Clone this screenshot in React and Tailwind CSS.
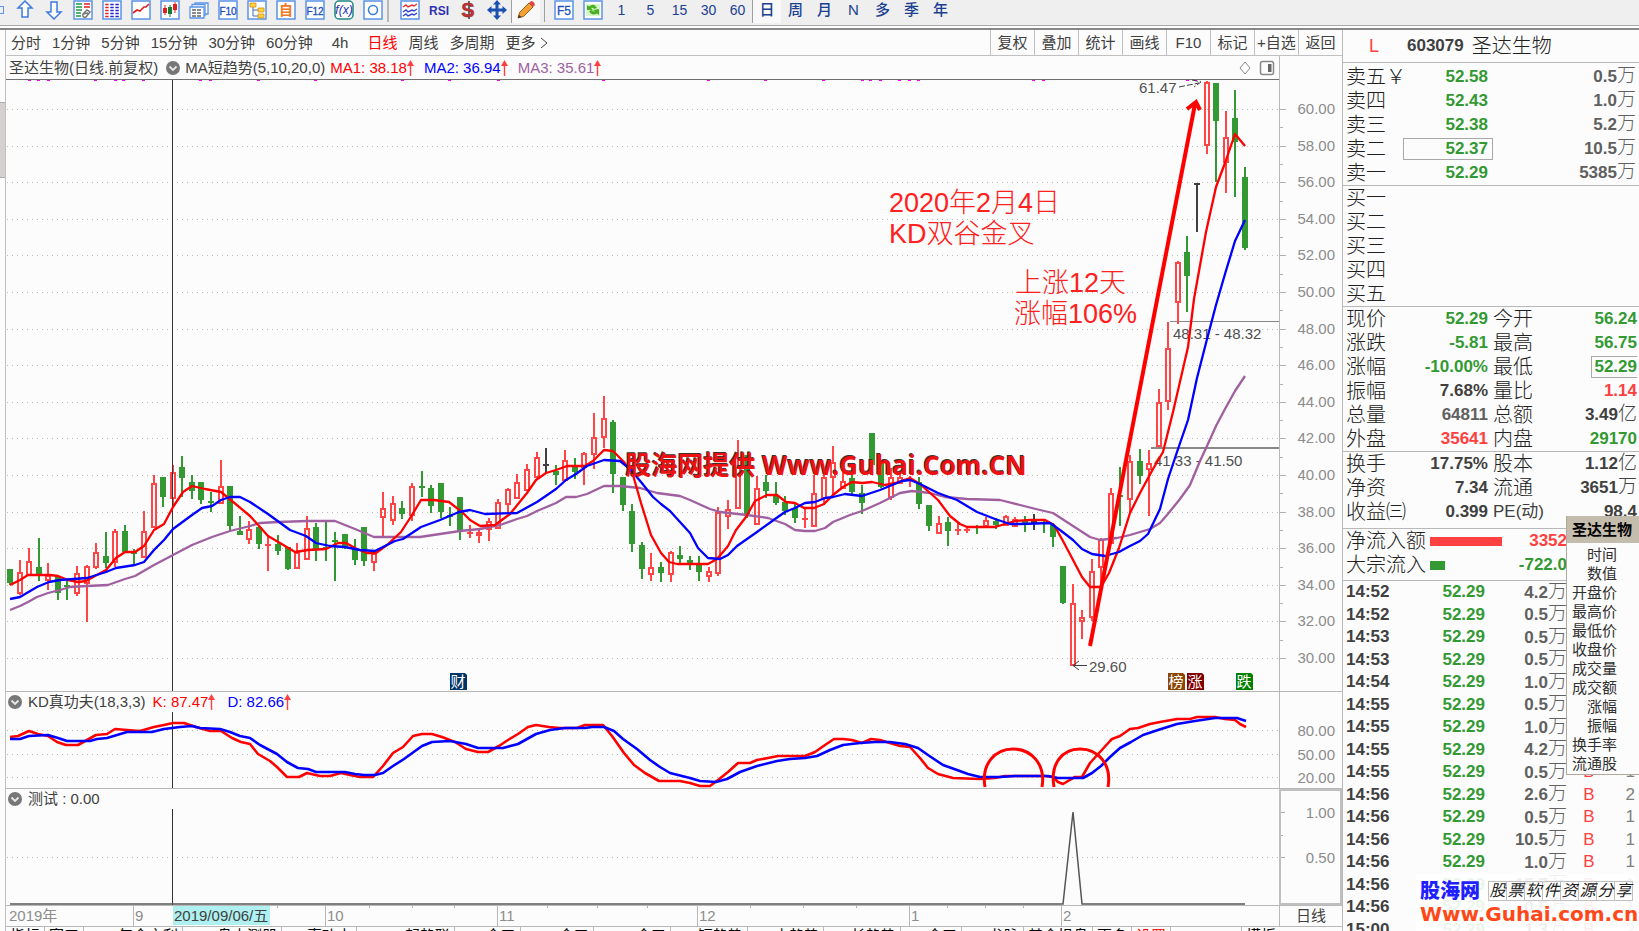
import { Fragment } from 'react';

const PERIODS = ['分时', '1分钟', '5分钟', '15分钟', '30分钟', '60分钟', '4h', '日线', '周线', '多周期', '更多'];
const ACTIONS = ['复权', '叠加', '统计', '画线', 'F10', '标记', '+自选', '返回'];
const MINUTES = ['1', '5', '15', '30', '60'];
const CYCLES = ['日', '周', '月', 'N', '多', '季', '年'];
const BOTTOM_TABS = [
  '指标', '窗口', 'VOL年金之利', 'VOL盘中测器', 'KD真功夫', 'MACD起趋联', 'MBI金叉', 'BIAS金叉', 'BOLL金叉',
  'MA短趋势', 'MA中趋势', 'MA长趋势', 'MA金叉', 'MA龙脉', '基金损盘', '更多', '设置',
];

const GREEN = 'text-[#339933]';
const RED = 'text-[#ff4040]';
const DARK = 'text-[#404040]';
const GRAY = 'text-[#606060]';

const SELLS = [
  ['卖五', '52.58', '0.5万'],
  ['卖四', '52.43', '1.0万'],
  ['卖三', '52.38', '5.2万'],
  ['卖二', '52.37', '10.5万'],
  ['卖一', '52.29', '5385万'],
];
const BUYS = ['买一', '买二', '买三', '买四', '买五'];

const QUOTES = [
  ['现价', '52.29', GREEN, '今开', '56.24', GREEN],
  ['涨跌', '-5.81', GREEN, '最高', '56.75', GREEN],
  ['涨幅', '-10.00%', GREEN, '最低', '52.29', GREEN],
  ['振幅', '7.68%', DARK, '量比', '1.14', RED],
  ['总量', '64811', GRAY, '总额', '3.49亿', DARK],
  ['外盘', '35641', RED, '内盘', '29170', GREEN],
];
const FUNDAMENTALS = [
  ['换手', '17.75%', DARK, '股本', '1.12亿', DARK],
  ['净资', '7.34', DARK, '流通', '3651万', DARK],
  ['收益㈢', '0.399', DARK, 'PE(动)', '98.4', DARK],
];

const TRADES = [
  ['14:52', '4.2万', '1'], ['14:52', '0.5万', '1'], ['14:53', '0.5万', '1'], ['14:53', '0.5万', '1'],
  ['14:54', '1.0万', '1'], ['14:55', '0.5万', '1'], ['14:55', '1.0万', '1'], ['14:55', '4.2万', '1'],
  ['14:55', '0.5万', '1'], ['14:56', '2.6万', '2'], ['14:56', '0.5万', '1'], ['14:56', '10.5万', '1'],
  ['14:56', '1.0万', '1'], ['14:56', '15.7万', '1'], ['14:56', '0.5万', '1'], ['15:00', '1.3万', '2'],
];

const TIP_ROWS = ['时间', '数值', '开盘价', '最高价', '最低价', '收盘价', '成交量', '成交额', '涨幅', '振幅', '换手率', '流通股'];

// kind, high, body top, body bottom, low (chart units)
const CANDLES = [
  ['g', 569, 569, 583, 585], ['r', 560, 572, 593, 595], ['r', 548, 561, 575, 575], ['g', 538, 567, 576, 581],
  ['r', 563, 575, 580, 590], ['g', 577, 577, 593, 600], ['g', 580, 585, 587, 600], ['r', 566, 573, 593, 596],
  ['r', 565, 566, 583, 622], ['r', 543, 552, 567, 569], ['g', 532, 556, 563, 568], ['r', 529, 531, 562, 567],
  ['g', 525, 531, 552, 552], ['g', 549, 552, 554, 564], ['r', 511, 531, 557, 557], ['r', 475, 483, 527, 528],
  ['g', 477, 477, 497, 507], ['r', 465, 472, 498, 505], ['g', 456, 467, 478, 497], ['g', 475, 482, 491, 499],
  ['g', 482, 482, 500, 504], ['g', 492, 501, 503, 512], ['r', 460, 486, 503, 504], ['g', 486, 486, 526, 531],
  ['g', 516, 531, 535, 535], ['r', 521, 529, 539, 544], ['g', 527, 527, 544, 549], ['r', 535, 544, 545, 571],
  ['g', 535, 544, 551, 555], ['g', 547, 547, 569, 570], ['r', 543, 552, 568, 568], ['r', 516, 528, 559, 559],
  ['g', 523, 527, 549, 561], ['g', 521, 547, 549, 561], ['g', 532, 540, 542, 581], ['g', 534, 534, 547, 549],
  ['g', 539, 548, 560, 565], ['g', 527, 527, 561, 566], ['r', 552, 553, 562, 571], ['r', 492, 508, 517, 536],
  ['r', 496, 503, 520, 525], ['g', 501, 508, 514, 519], ['r', 483, 486, 515, 521], ['g', 471, 486, 488, 497],
  ['g', 485, 488, 506, 513], ['g', 483, 483, 512, 518], ['g', 507, 515, 517, 526], ['g', 497, 497, 531, 540],
  ['r', 525, 532, 533, 538], ['r', 528, 532, 535, 543], ['r', 518, 521, 529, 541], ['r', 499, 502, 528, 528],
  ['r', 488, 489, 504, 513], ['r', 474, 482, 498, 498], ['r', 464, 469, 490, 490], ['r', 452, 457, 477, 479],
  ['k', 448, 464, 466, 473], ['g', 465, 471, 475, 485], ['r', 450, 460, 480, 482], ['g', 458, 466, 472, 479],
  ['r', 452, 453, 467, 485], ['r', 413, 437, 454, 469], ['r', 396, 418, 437, 448], ['g', 420, 422, 474, 493],
  ['g', 477, 477, 505, 511], ['g', 504, 511, 544, 552], ['g', 542, 545, 569, 579], ['r', 553, 567, 574, 581],
  ['g', 562, 567, 573, 582], ['r', 551, 552, 574, 582], ['g', 546, 555, 559, 563], ['g', 556, 560, 564, 570],
  ['g', 556, 563, 572, 581], ['r', 567, 571, 576, 582], ['r', 507, 512, 573, 576], ['r', 500, 509, 516, 529],
  ['r', 440, 467, 508, 508], ['g', 455, 455, 514, 518], ['r', 476, 488, 524, 524], ['g', 475, 482, 491, 498],
  ['g', 482, 495, 503, 505], ['g', 496, 502, 511, 515], ['g', 504, 508, 518, 523], ['r', 507, 518, 519, 528],
  ['r', 475, 493, 526, 526], ['r', 473, 477, 498, 505], ['r', 446, 462, 477, 495], ['r', 468, 481, 488, 488],
  ['g', 472, 478, 492, 495], ['g', 485, 493, 503, 514], ['g', 433, 433, 465, 465], ['g', 462, 463, 487, 488],
  ['r', 468, 477, 497, 500], ['r', 473, 477, 483, 483], ['r', 476, 479, 480, 487], ['g', 477, 482, 504, 509],
  ['g', 505, 505, 526, 531], ['r', 516, 523, 533, 533], ['g', 517, 522, 531, 546], ['r', 523, 529, 530, 535],
  ['r', 526, 529, 530, 533], ['g', 525, 526, 527, 534], ['r', 517, 520, 526, 526], ['g', 518, 521, 525, 529],
  ['r', 515, 516, 525, 525], ['r', 517, 519, 526, 526], ['g', 516, 520, 523, 532], ['k', 514, 521, 523, 530],
  ['g', 519, 522, 523, 533], ['g', 523, 525, 537, 547], ['g', 566, 566, 603, 604], ['r', 584, 603, 665, 665],
  ['r', 610, 617, 621, 639], ['r', 559, 571, 617, 621], ['r', 538, 539, 567, 587], ['r', 488, 493, 543, 543],
  ['g', 467, 495, 496, 526], ['r', 455, 461, 499, 513], ['g', 449, 461, 476, 484], ['r', 450, 463, 469, 516],
  ['r', 389, 402, 446, 446], ['r', 322, 348, 401, 410], ['r', 261, 262, 302, 324], ['g', 236, 252, 276, 312],
  ['k', 183, 183, 185, 232], ['r', 81, 82, 145, 154], ['g', 83, 83, 121, 182], ['r', 111, 137, 162, 193],
  ['g', 90, 118, 142, 197], ['g', 167, 177, 248, 250],
];
const CANDLE_COLORS = { r: '#ff4545', g: '#339933', k: '#404040' };

const MA1 = '10,585 20,580 28,575 50,575 58,576 68,580 78,582 86,581 95,576 106,570 116,558 125,552 135,552 144,546 154,530 164,524 173,507 183,492 192,486 205,489 221,492 232,501 250,516 260,527 268,536 280,543 295,552 308,550 326,549 338,543 346,543 357,549 367,553 376,553 387,545 401,532 412,515 421,500 434,500 449,502 462,512 470,520 480,526 495,525 510,514 527,493 536,480 546,473 556,470 567,466 585,466 593,461 604,450 613,451 624,462 633,475 641,503 651,535 661,553 669,562 677,564 708,564 717,559 728,546 736,530 746,517 755,501 767,495 777,495 786,502 795,503 804,508 814,508 824,504 833,495 843,487 852,482 862,483 872,482 885,485 895,483 910,478 920,484 938,500 950,516 960,524 967,527 995,527 1005,524 1015,521 1030,520 1045,520 1054,525 1063,541 1072,558 1082,577 1090,587 1101,587 1109,573 1119,548 1130,513 1140,493 1153,469 1163,452 1173,412 1188,347 1194,299 1206,232 1216,187 1225,163 1235,134 1245,146';
const MA2 = '10,599 20,597 37,587 49,582 60,580 87,578 106,572 116,568 135,565 144,562 154,550 164,540 173,529 192,515 202,508 212,506 221,500 230,497 240,497 250,502 268,514 279,522 290,530 306,536 316,543 330,546 345,547 360,550 375,551 385,546 395,541 403,539 412,533 421,527 440,520 459,512 470,510 485,514 517,513 537,502 556,489 566,480 576,474 587,466 604,460 620,461 630,469 641,482 653,497 661,504 670,511 690,533 698,548 708,558 720,559 728,555 737,546 757,532 775,519 785,512 795,508 805,503 815,502 825,498 833,497 845,494 862,496 880,490 902,481 910,480 920,484 938,493 957,500 967,506 977,512 995,519 1010,524 1020,524 1050,523 1060,530 1073,540 1082,549 1092,554 1105,556 1119,552 1128,547 1140,541 1148,534 1160,509 1168,479 1177,452 1188,420 1197,378 1206,343 1216,305 1225,274 1235,241 1245,220';
const MA3 = '10,610 20,606 28,602 37,597 48,593 60,590 70,587 87,586 108,585 125,579 135,576 154,565 173,555 192,545 212,537 230,531 250,526 260,523 278,522 308,521 335,521 355,529 374,537 420,537 440,534 460,531 480,529 500,525 517,519 527,516 537,511 556,503 566,497 576,497 587,494 604,486 620,486 640,488 657,493 680,496 690,500 710,509 720,512 747,515 768,518 785,524 795,530 805,531 815,531 825,528 833,522 850,515 862,511 880,503 900,493 912,491 930,493 945,497 967,499 1000,500 1020,505 1040,510 1053,513 1073,526 1090,537 1100,540 1117,538 1130,535 1150,529 1160,523 1167,515 1180,499 1190,485 1200,461 1207,446 1216,426 1225,409 1235,391 1245,376';

const K_LINE = '10,737 18,736 29,731 38,734 48,736 57,742 66,745 78,745 87,740 96,735 107,734 115,729 127,730 140,731 154,727 164,725 173,723 184,723 196,727 210,731 221,731 232,738 241,742 250,744 258,754 270,761 277,767 287,777 299,777 307,773 320,776 330,776 341,773 350,775 360,777 373,777 383,766 393,753 403,747 413,736 422,734 432,734 442,737 455,742 466,749 478,752 488,752 499,746 508,740 518,734 528,727 536,725 549,727 560,728 577,728 585,725 603,725 612,736 624,753 634,765 645,773 659,781 680,781 690,783 700,786 710,786 718,780 728,772 738,763 750,763 757,760 768,758 778,756 805,756 815,752 825,745 834,739 843,739 852,740 862,743 871,739 880,740 890,743 900,746 910,747 920,758 928,768 938,774 953,778 980,779 995,778 1005,776 1045,776 1053,777 1058,782 1063,784 1068,781 1075,777 1082,777 1090,763 1100,752 1110,741 1112,739 1120,736 1130,729 1138,728 1150,724 1160,722 1177,719 1190,719 1197,717 1215,717 1225,719 1235,720 1240,724 1246,727';
const D_LINE = '10,739 20,739 29,736 48,735 58,738 67,741 90,741 97,739 107,738 117,735 127,732 152,732 164,729 180,727 192,726 200,728 220,729 230,732 240,736 250,738 260,745 277,754 287,762 298,768 308,769 316,772 345,772 355,774 364,775 375,775 383,773 393,766 404,759 422,746 432,742 450,741 466,744 478,748 503,748 518,744 536,734 550,730 565,728 585,728 592,727 604,727 614,731 623,739 637,749 650,760 660,767 670,773 690,778 700,781 716,782 727,779 740,772 757,766 777,761 790,759 805,758 817,756 830,750 843,745 860,743 875,742 890,742 905,744 918,748 928,755 943,765 957,770 968,774 980,777 1000,777 1015,776 1048,776 1058,778 1083,778 1092,773 1101,766 1110,757 1120,748 1131,742 1143,735 1158,730 1177,724 1195,721 1215,718 1237,718 1246,721';

const EVENT_DOTS = [29, 38, 48, 95, 115, 123, 143, 200, 210, 258, 315, 402, 449, 498, 603, 708, 765, 823, 862, 870, 880, 899, 909, 918, 1033, 1043, 1187, 1195];
const BADGES = [
  [450, '财', '#003366'],
  [1168, '榜', '#8b4500'],
  [1187, '涨', '#800000'],
  [1236, '跌', '#008000'],
];
const MONTHS = [[133, '9'], [325, '10'], [497, '11'], [697, '12'], [909, '1'], [1061, '2']];
const WEEK_TICKS = [277, 369, 412, 454, 547, 597, 647, 750, 803, 856, 947, 985, 1023];

const priceY = (p) => Math.round(109 + (60 - p) * 18.3);
const PRICES = Array.from({ length: 16 }, (_, i) => 60 - i * 2);

function Grid({ ys }) {
  return ys.map((y) => (
    <line key={y} x1="7" x2="1279" y1={y + 0.5} y2={y + 0.5} stroke="#b8b8b8" strokeDasharray="1 4" />
  ));
}

function Candle({ index, data }) {
  const [kind, high, top, bottom, low] = data;
  const x = Math.round(10 + index * 9.573);
  const color = CANDLE_COLORS[kind];
  const thin = bottom - top < 3;
  return (
    <g fill={color}>
      {kind === 'r' && !thin ? (
        <>
          <rect x={x - 1} y={high} width="2" height={top - high} />
          <rect x={x - 1} y={bottom} width="2" height={low - bottom} />
          <rect x={x - 2} y={top + 1} width="4" height={bottom - top - 1} fill="none" stroke={color} strokeWidth="2" />
        </>
      ) : (
        <>
          <rect x={x - 1} y={high} width="2" height={low - high} />
          <rect x={x - 3} y={top} width="6" height={Math.max(bottom - top, 2)} />
        </>
      )}
    </g>
  );
}

function PriceChart() {
  return (
    <svg viewBox="6 79 1273 612" preserveAspectRatio="none" className="block w-full flex-1 min-h-0">
      <g shapeRendering="crispEdges">
        <Grid ys={PRICES.map(priceY)} />
        <rect x="6" y="79" width="1273" height="1" fill="#707070" />
        {EVENT_DOTS.map((x) => <rect key={x} x={x - 1} y="80" width="3" height="1" fill="#ff00ff" />)}
        <rect x="1170" y="321" width="109" height="1" fill="#888" />
        <rect x="1151" y="447" width="128" height="2" fill="#888" />
        {CANDLES.map((c, i) => <Candle key={i} index={i} data={c} />)}
        <rect x="172" y="80" width="1" height="611" fill="#333" />
      </g>

      <g fill="#505050" fontSize="15" className="font-[Liberation_Sans,sans-serif]">
        <text x="1139" y="93">61.47</text>
        <text x="1173" y="339">48.31 - 48.32</text>
        <text x="1154" y="466">41.33 - 41.50</text>
        <text x="1089" y="672">29.60</text>
      </g>
      <path d="M1179 87l20-4M1192 80l9 2-7 5" fill="none" stroke="#404040" strokeDasharray="6 2" />
      <path d="M1087 665.5h-14M1079 661l-6 4.5 6 4.5" fill="none" stroke="#404040" />

      <g fill="none" strokeWidth="2.3" strokeLinejoin="round">
        <polyline points={MA3} stroke="#a060a0" />
        <polyline points={MA1} stroke="#ff0000" />
        <polyline points={MA2} stroke="#0000ff" />
      </g>

      <path d="M1090 646L1195 104M1187 109l9-7 4 8" fill="none" stroke="#ff0000" strokeWidth="4" />

      <g fill="#ff2020" fontSize="27" className="font-[Liberation_Sans,'Noto_Sans_CJK_SC',sans-serif] font-light">
        <text x="889" y="212">2020年2月4日</text>
        <text x="889" y="243">KD双谷金叉</text>
        <text x="1015" y="292">上涨12天</text>
        <text x="1014" y="323">涨幅106%</text>
      </g>

      {BADGES.map(([x, label, color]) => (
        <g key={label}>
          <path d={`M${x} 673h15l2 2v15h-17z`} fill={color} />
          <text x={x + 8} y="687" fontSize="15" fill="#fff" textAnchor="middle" className="font-['Noto_Sans_CJK_SC',sans-serif]">{label}</text>
        </g>
      ))}
    </svg>
  );
}

function PriceAxis() {
  return (
    <svg viewBox="1280 56 62 635" preserveAspectRatio="none" className="block w-full h-full">
      {PRICES.map((p) => (
        <g key={p}>
          <rect x="1280" y={priceY(p)} width="6" height="1" fill="#b0b0b0" />
          {p > 30 && <rect x="1280" y={priceY(p - 1)} width="3" height="1" fill="#b0b0b0" />}
          <text x="1335" y={priceY(p) + 5} fontSize="15" fill="#8c8c8c" textAnchor="end">{p.toFixed(2)}</text>
        </g>
      ))}
    </svg>
  );
}

function KdChart() {
  return (
    <svg viewBox="6 712 1273 76" preserveAspectRatio="none" className="block w-full flex-1 min-h-0">
      <g shapeRendering="crispEdges">
        <Grid ys={[730, 754, 777]} />
        <rect x="172" y="712" width="1" height="76" fill="#333" />
      </g>
      <g fill="none" strokeWidth="2.6" strokeLinejoin="round">
        <polyline points={K_LINE} stroke="#ff0000" />
        <polyline points={D_LINE} stroke="#0000ff" />
      </g>
      <g fill="none" stroke="#ff0000" strokeWidth="3">
        <path d="M985 787C981 764 995 749 1013 749C1031 749 1046 764 1042 787" />
        <path d="M1054 787C1050 764 1062 749 1080 749C1098 749 1112 764 1108 787" />
      </g>
    </svg>
  );
}

function TestChart() {
  return (
    <svg viewBox="6 809 1273 96" preserveAspectRatio="none" className="block w-full flex-1 min-h-0">
      <g shapeRendering="crispEdges">
        <Grid ys={[857]} />
        <rect x="172" y="809" width="1" height="96" fill="#333" />
      </g>
      <path d="M10 904H1063L1073 812L1082 904H1245" fill="none" stroke="#555" strokeWidth="1.5" />
    </svg>
  );
}

function TimeAxis() {
  return (
    <svg viewBox="6 906 1273 20" preserveAspectRatio="none" className="block h-full flex-1 min-w-0">
      <g fontSize="15" fill="#8c8c8c">
        <text x="9" y="921">2019年</text>
        {MONTHS.map(([x, label]) => (
          <Fragment key={label}>
            <rect x={x} y="906" width="1" height="20" fill="#b8b8b8" />
            <text x={x + 2} y="921">{label}</text>
          </Fragment>
        ))}
        {WEEK_TICKS.map((x) => <rect key={x} x={x} y="906" width="1" height="2" fill="#b0b0b0" />)}
      </g>
      <rect x="173" y="906" width="97" height="19" fill="#aff0f0" />
      <text x="174" y="921" fontSize="15" fill="#404040">2019/09/06/五</text>
    </svg>
  );
}

function Collapse() {
  return (
    <button type="button" aria-label="collapse" className="w-[14px] h-[14px] shrink-0">
      <svg viewBox="0 0 14 14" className="block w-full h-full">
        <circle cx="7" cy="7" r="7" fill="#777" />
        <path d="M3.5 5.5L7 9l3.5-3.5" fill="none" stroke="#e8e8e8" strokeWidth="1.8" />
      </svg>
    </button>
  );
}

function UpArrow() {
  return (
    <svg viewBox="0 0 7 16" className="inline-block w-[7px] h-4 shrink-0">
      <path d="M3.500 0L7 6H0z" fill="#ff4040" />
      <path d="M3.500 4v12" stroke="#ff4040" strokeWidth="1.4" />
    </svg>
  );
}

/* ---- toolbar icons, all on a 20x20 board ---- */
const box = <rect x="1" y="1" width="18" height="18" fill="#fff" stroke="#5b94e8" strokeWidth="1.5" />;
const lines = (x, color) => <path d={`M${x} 4.5h3.4M${x} 7.5h3.4M${x} 10.5h3.4M${x} 13.5h3.4M${x} 16.5h3.4`} stroke={color} strokeWidth="1.4" />;
const boxText = (label, size = 12) => (
  <text x="10" y="15" fontSize={size} textAnchor="middle" fill="#2050c0" stroke="#2050c0" strokeWidth=".3">{label}</text>
);

const ICONS_A = {
  up: <path d="M10 1l7 7h-4v9H7V8H3z" fill="#fff" stroke="#3f7be0" strokeWidth="1.5" />,
  down: <path d="M10 19l7-7h-4V2H7v10H3z" fill="#fff" stroke="#3f7be0" strokeWidth="1.5" />,
  info: <>{box}<path d="M3 4h6M3 7h6" stroke="#1b9a40" strokeWidth="1.5" /><path d="M11 4h6M11 7h6" stroke="#e02020" strokeWidth="1.5" /><path d="M3 10h6M3 13h5M3 16h5" stroke="#1b9a40" strokeWidth="1.3" /><path d="M10 14l4-4 3 2-4 5q-4 1-3-3l5-1" fill="none" stroke="#777" strokeWidth="1.5" /></>,
  list: <>{box}{lines(3.2, '#e02020')}{lines(8.3, '#2020d0')}{lines(13.4, '#2020d0')}</>,
  line: <>{box}<path d="M2 13l4-3 3 1 4-4h2l3-3" fill="none" stroke="#e02020" strokeWidth="1.6" /></>,
  candle: <>{box}<path d="M5 5v10M15 2v11" stroke="#e02020" /><path d="M10 5v12" stroke="#108030" /><path d="M3 8h4v5H3zM13 4h4v6h-4z" fill="#e02020" /><path d="M8 7h4v7H8z" fill="#108030" /></>,
  stack: <><path d="M6 3h13v11H6z" fill="#fff" stroke="#5b94e8" strokeWidth="1.3" /><path d="M3 4.500h13v11H3z" fill="#fff" stroke="#5b94e8" strokeWidth="1.3" /><path d="M1 7h14v11H1z" fill="#fff" stroke="#5b94e8" strokeWidth="1.3" /><path d="M3 10h4M8 10h4M3 13h4M8 13h4M3 16h4M8 16h4" stroke="#666" strokeWidth="1.3" /></>,
  f10: <>{box}{boxText('F10', 10)}</>,
  tree: <>{box}<path d="M6 7v9h6M6 10h6" fill="none" stroke="#4070c0" /><path d="M3 3h6v4H3zM11 8h6v4h-6zM11 14h6v4h-6z" fill="#ffd040" stroke="#d09010" strokeWidth=".8" /></>,
  self: <>{box}<text x="10" y="15" fontSize="14" fontWeight="700" textAnchor="middle" fill="#f07820">自</text></>,
  f12: <>{box}{boxText('F12', 10)}</>,
  fx: <><rect x="1" y="1" width="18" height="18" rx="4" fill="#fff" stroke="#258585" strokeWidth="1.5" /><text x="10" y="14" fontSize="12" fontStyle="italic" textAnchor="middle" fill="#2030b0">f(x)</text></>,
  ring: <>{box}<circle cx="10" cy="10" r="4.500" fill="none" stroke="#3c82d8" strokeWidth="1.6" /></>,
};
const ICONS_B = {
  waves: <>{box}<path d="M3 7l3-2 2 2 4-2 2 1 3-2" fill="none" stroke="#e03030" strokeWidth="1.4" /><path d="M3 12l3-2 2 2 4-2 2 1 3-2M3 16l3-2 2 2 4-2 2 1 3-2" fill="none" stroke="#3040d0" strokeWidth="1.4" /></>,
  rsi: <text x="10" y="15" fontSize="12" fontWeight="700" textAnchor="middle" fill="#3030b0">RSI</text>,
  dollar: <><path d="M11 1v18" stroke="#666" strokeWidth="2" /><text x="10" y="17" fontSize="20" fontWeight="700" textAnchor="middle" fill="#c83030" stroke="#803030" strokeWidth=".5">S</text></>,
  move: <path d="M10 0l4 4.500h-2.500v4h4V6L20 10l-4.500 4v-2.500h-4v4H14L10 20l-4-4.500h2.500v-4h-4V14L0 10l4.500-4v2.500h4v-4H6z" fill="#1a50b0" />,
  pencil: <><path d="M2 18l1.500-5.500L13 3l4 4-9.500 9.500z" fill="#f5a030" stroke="#704010" strokeWidth=".8" /><path d="M13 3l2-2q3 0 4 4l-2 2z" fill="#e04848" /><path d="M2 18l1-3 2.500 2z" fill="#333" /></>,
};
const ICONS_C = {
  f5: <>{box}{boxText('F5')}</>,
  refresh: <>{box}<path d="M3 4h14v12H3z" fill="#d8f4c8" /><path d="M4 10V5l2 1.500q5-4 8 1.500l-3 1q-1-2-3-1l2 2zM16 9v6l-2-1.500q-5 3-8-2.500l3-1q1 2 3 1.500L10 10z" fill="#48b020" /></>,
};

function Tool({ name, pressed, children }) {
  return (
    <button type="button" aria-label={name} className={`w-[29px] h-[23px] flex items-start justify-center shrink-0 ${pressed ? 'bg-[#f8f8f8] border-l border-[#a0a0a0]' : ''}`}>
      {children}
    </button>
  );
}

function IconTools({ icons, pressed }) {
  return Object.entries(icons).map(([name, art]) => (
    <Tool key={name} name={name} pressed={name === pressed}>
      <svg viewBox="0 0 20 20" className="block w-5 h-5">{art}</svg>
    </Tool>
  ));
}

function Toolbar() {
  return (
    <header className="h-[30px] shrink-0 bg-white border-b-2 border-[#888]">
      <div className="h-[26px] bg-[#efefef] border-b border-[#a8a8a8] flex items-start">
        <div className="w-[10px] h-5 flex items-center"><span className="w-1 h-2 border border-l-0 border-[#5b94e8]" /></div>
        <IconTools icons={ICONS_A} />
        <span className="w-2 h-[22px] border-l-2 border-[#b8b8b8]" />
        <IconTools icons={ICONS_B} pressed="pencil" />
        <span className="w-[5px] h-[22px] border-l border-[#a0a0a0] ml-1" />
        <IconTools icons={ICONS_C} />
        {MINUTES.map((m) => (
          <Tool key={m} name={m}><span className="text-sm leading-5 text-[#1a4090]">{m}</span></Tool>
        ))}
        {CYCLES.map((c) => (
          <Tool key={c} name={c} pressed={c === '日'}><span className="text-[15px] leading-5 font-medium text-[#1a4090]">{c}</span></Tool>
        ))}
      </div>
    </header>
  );
}

function PeriodBar() {
  return (
    <nav className="h-[26px] shrink-0 flex items-stretch justify-between border-b border-[#c0c0c0]">
      <div className="flex items-center gap-[11px] pl-[5px]">
        {PERIODS.map((p) => (
          <button key={p} type="button" className={`flex items-center whitespace-nowrap ${p === '日线' ? 'text-[#ff0000]' : ''} ${p === '4h' ? 'px-2' : ''}`}>
            {p}
            {p === '更多' && (
              <svg viewBox="0 0 8 12" className="ml-1 w-2 h-3"><path d="M1 1l6 5-6 5" fill="none" stroke="currentColor" /></svg>
            )}
          </button>
        ))}
      </div>
      <div className="flex">
        {ACTIONS.map((a) => (
          <button key={a} type="button" className="w-11 border-l border-[#c0c0c0] whitespace-nowrap flex items-center justify-center">{a}</button>
        ))}
      </div>
    </nav>
  );
}

function Amount({ value }) {
  const unit = value.match(/[万亿]$/);
  if (!unit) return value;
  return <>{value.slice(0, -1)}<span className="text-[19px] leading-none font-light">{unit[0]}</span></>;
}

const LABEL = 'text-xl leading-[22px] font-light text-[#202020] whitespace-nowrap';

function QuoteTable({ rows }) {
  return (
    <table className="w-full table-fixed leading-[22px]">
      <colgroup><col className="w-[65px]" /><col className="w-[80px]" /><col className="w-[60px]" /><col /></colgroup>
      <tbody>
        {rows.map(([a, av, ac, b, bv, bc]) => (
          <tr key={a} className="h-6">
            <th className={`p-0 pl-[3px] text-left ${LABEL}`}>{a}</th>
            <td className={`p-0 text-right font-bold ${ac}`}>{av}</td>
            <th className={`p-0 pl-[5px] text-left whitespace-nowrap ${b === 'PE(动)' ? 'text-[17px] font-normal' : LABEL}`}>{b}</th>
            <td className={`p-0 pr-[2px] text-right font-bold ${bc}`}>
              {b === '最低'
                ? <div className="ml-auto w-[46px] leading-5 border border-r-0 border-[#a8a8a8]">{bv}</div>
                : <Amount value={bv} />}
            </td>
          </tr>
        ))}
      </tbody>
    </table>
  );
}

function SidePanel() {
  return (
    <aside className="w-[297px] shrink-0 border-l border-[#b8b8b8] flex flex-col overflow-hidden text-[17px]">
      <h1 className="h-[33px] shrink-0 flex items-center border-b border-[#b8b8b8] pl-[26px]">
        <span className="w-[38px] text-lg text-[#ff4040]">L</span>
        <span className="font-bold">603079</span>
        <span className="text-xl font-light text-[#202020] pl-2">圣达生物</span>
      </h1>

      <div className="pt-[2px] border-b border-[#b8b8b8]">
        <table className="w-full table-fixed leading-[22px]">
          <colgroup><col className="w-[60px]" /><col className="w-[90px]" /><col /></colgroup>
          <tbody>
            {SELLS.map(([label, price, vol]) => (
              <tr key={label} className="h-6">
                <th className={`p-0 pl-[3px] text-left ${LABEL}`}>{label}{label === '卖五' && '￥'}</th>
                <td className={`p-0 ${GREEN}`}>
                  <div className={`text-right font-bold leading-5 pr-1 border ${label === '卖二' ? 'border-[#a8a8a8]' : 'border-transparent'}`}>{price}</div>
                </td>
                <td className={`p-0 pr-[3px] text-right font-bold ${GRAY}`}><Amount value={vol} /></td>
              </tr>
            ))}
          </tbody>
        </table>
      </div>

      <ul className="border-b border-[#b8b8b8]">
        {BUYS.map((b) => <li key={b} className="h-6 pl-[3px] text-xl leading-6 font-light text-[#202020]">{b}</li>)}
      </ul>

      <div className="border-b border-[#b8b8b8]"><QuoteTable rows={QUOTES} /></div>
      <div className="border-b border-[#b8b8b8] pb-1"><QuoteTable rows={FUNDAMENTALS} /></div>

      <div className="border-b border-[#b8b8b8] pb-[3px] font-bold">
        <div className="h-6 flex items-center pl-[3px]">
          <span className={`w-[84px] ${LABEL}`}>净流入额</span>
          <span className="w-[72px] h-[9px] bg-[#ff4040]" />
          <span className={`w-[65px] text-right ${RED}`}>3352</span>
        </div>
        <div className="h-6 flex items-center pl-[3px]">
          <span className={`w-[84px] ${LABEL}`}>大宗流入</span>
          <span className="w-[15px] h-[9px] bg-[#339933]" />
          <span className={`w-[122px] text-right ${GREEN}`}>-722.0</span>
        </div>
      </div>

      <div className="flex-1 min-h-0 overflow-hidden">
        <table className="w-full h-[360px] table-fixed leading-5">
          <colgroup><col className="w-[60px]" /><col className="w-[82px]" /><col className="w-[82px]" /><col className="w-[44px]" /><col /></colgroup>
          <tbody>
            {TRADES.map(([time, vol, count], i) => (
              <tr key={i}>
                <td className="p-0 pl-[3px] font-bold">{time}</td>
                <td className={`p-0 text-right font-bold ${GREEN}`}>52.29</td>
                <td className={`p-0 text-right font-bold ${GRAY}`}><Amount value={vol} /></td>
                <td className={`p-0 text-center ${RED}`}>B</td>
                <td className="p-0 pr-1 text-right text-[#808080]">{count}</td>
              </tr>
            ))}
          </tbody>
        </table>
      </div>
    </aside>
  );
}

function DataTip() {
  return (
    <div className="absolute right-0 top-[516px] w-[73px] bg-[#fcfcfc] border-l border-b border-[#b0a898] text-[15px] pb-px">
      <div className="h-[27px] flex items-center bg-[#c4bcac] pl-[5px] font-bold text-black">圣达生物</div>
      <ul className="w-[50px] pt-[2px] text-right leading-[19px] text-[#303030]">
        {TIP_ROWS.map((r) => <li key={r}>{r}</li>)}
      </ul>
    </div>
  );
}

function SiteMark() {
  return (
    <div className="absolute right-1 bottom-0 h-[57px] w-[219px] bg-white/90 pt-1 pl-1">
      <div className="flex items-center gap-2">
        <span className="text-xl leading-[26px] font-black text-[#2020ff]">股海网</span>
        <span className="flex border-l border-[#c0c0c0] text-base leading-[18px] text-[#202020]">
          {'股票软件资源分享'.split('').map((ch) => (
            <span key={ch} className="w-[18px] text-center italic border-r border-y border-[#c0c0c0]">{ch}</span>
          ))}
        </span>
      </div>
      <a href="#guhai" className="block font-['DejaVu_Sans',sans-serif] text-xl leading-5 font-bold text-[#ff4818]">Www.Guhai.com.cn</a>
    </div>
  );
}

export default function App() {
  return (
    <div className="relative h-screen overflow-hidden flex flex-col bg-[#fcfcfc] text-[#404040] text-[15px] leading-5 font-['Liberation_Sans','Noto_Sans_CJK_SC',sans-serif]">
      <Toolbar />
      <div className="flex-1 min-h-0 flex">
        {/* collapsed dock on the far left */}
        <div className="w-[5px] shrink-0 pt-[72px]">
          <div className="h-[76px] bg-[#d4d0d0] border-y border-[#b0b0b0]" />
        </div>

        <main className="flex-1 min-w-0 border-l border-[#c0c0c0] flex flex-col">
          <PeriodBar />

          <section className="flex-1 min-h-0 flex">
            <div className="relative flex-1 min-w-0 flex flex-col">
              <div className="h-[23px] shrink-0 flex items-center pl-[3px] pr-1 whitespace-nowrap">
                <span className="pr-2">圣达生物(日线.前复权)</span>
                <Collapse />
                <span className="pl-[5px] pr-[5px]">MA短趋势(5,10,20,0)</span>
                <span className="text-[#ff0000]">MA1: 38.18</span><UpArrow />
                <span className="pl-[10px] text-[#0000ff]">MA2: 36.94</span><UpArrow />
                <span className="pl-[10px] text-[#a060a0]">MA3: 35.61</span><UpArrow />
                <span className="flex-1" />
                <svg viewBox="0 0 12 14" className="w-3 h-[14px] mr-2"><path d="M6 1l5 6-5 6-5-6z" fill="none" stroke="#888" /></svg>
                <svg viewBox="0 0 16 16" className="w-4 h-4">
                  <rect x="1.500" y="1.500" width="13" height="13" rx="2" fill="none" stroke="#888" strokeWidth="1.500" />
                  <path d="M9 4h3.500v8H9z" fill="#666" />
                </svg>
              </div>
              <PriceChart />
              <div className="absolute left-1/2 top-[391px] ml-[-17px] whitespace-nowrap font-['Open_Sans','Noto_Sans_CJK_SC',sans-serif] text-[26px] leading-9 font-bold text-[#ee1111] [text-shadow:-1px_-1px_0_#403030]">
                股海网提供 Www.Guhai.Com.CN
              </div>
            </div>
            <div className="w-[63px] shrink-0 border-l border-[#b8b8b8]"><PriceAxis /></div>
          </section>

          <section className="h-[97px] shrink-0 flex border-t border-[#b8b8b8]">
            <div className="flex-1 min-w-0 flex flex-col">
              <div className="h-5 shrink-0 flex items-center pl-[2px] whitespace-nowrap">
                <Collapse />
                <span className="pl-[6px] pr-[7px]">KD真功夫(18,3,3)</span>
                <span className="text-[#ff0000]">K: 87.47</span><UpArrow />
                <span className="pl-3 text-[#0000ff]">D: 82.66</span><UpArrow />
              </div>
              <KdChart />
            </div>
            <div className="w-[63px] shrink-0 border-l border-[#b8b8b8]">
              <svg viewBox="1280 692 62 96" preserveAspectRatio="none" className="block w-full h-full">
                <g fontSize="15" fill="#8c8c8c" textAnchor="end">
                  <text x="1335" y="736">80.00</text>
                  <text x="1335" y="760">50.00</text>
                  <text x="1335" y="783">20.00</text>
                </g>
              </svg>
            </div>
          </section>

          <section className="h-[117px] shrink-0 flex border-t border-[#b8b8b8]">
            <div className="flex-1 min-w-0 flex flex-col">
              <div className="h-5 shrink-0 flex items-center pl-[2px] whitespace-nowrap">
                <Collapse />
                <span className="pl-[6px]">测试 : 0.00</span>
              </div>
              <TestChart />
            </div>
            <div className="w-[63px] shrink-0 border-2 border-[#c0c0c0]">
              <svg viewBox="1281 791 59 112" preserveAspectRatio="none" className="block w-full h-full">
                <g fill="#b0b0b0">
                  <rect x="1281" y="812" width="4" height="1" />
                  <rect x="1281" y="835" width="2" height="1" />
                  <rect x="1281" y="857" width="4" height="1" />
                </g>
                <g fontSize="15" fill="#8c8c8c" textAnchor="end">
                  <text x="1335" y="818">1.00</text>
                  <text x="1335" y="863">0.50</text>
                </g>
              </svg>
            </div>
          </section>

          <div className="h-[21px] shrink-0 flex border-t border-[#b8b8b8]">
            <TimeAxis />
            <div className="w-[63px] shrink-0 border-l border-[#b8b8b8] text-center">日线</div>
          </div>

          <div className="h-[5px] shrink-0 overflow-hidden border-t border-[#b8b8b8] flex items-start">
            {BOTTOM_TABS.map((t) => (
              <button key={t} type="button" className={`px-1 border-r border-[#b8b8b8] whitespace-nowrap leading-[18px] ${t === '设置' ? 'text-[#ff0000]' : 'text-black'}`}>{t}</button>
            ))}
            <button type="button" className="ml-auto mr-[62px] px-1 leading-[18px] text-black border-l border-[#b8b8b8]">模板</button>
          </div>
        </main>

        <SidePanel />
      </div>
      <DataTip />
      <SiteMark />
    </div>
  );
}
